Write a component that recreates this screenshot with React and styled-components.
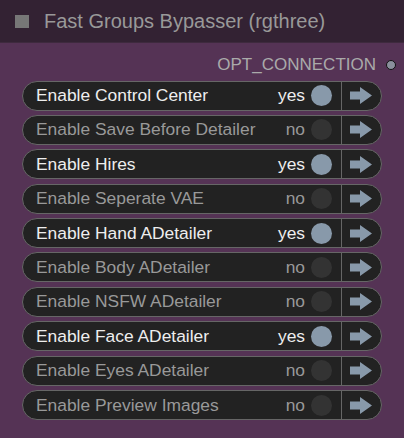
import React from "react";
import styled, { createGlobalStyle } from "styled-components";

const Global = createGlobalStyle`
  html, body { margin: 0; padding: 0; background: #553355; }
  body { font-family: Arial, "Liberation Sans", sans-serif; }
`;

const Node = styled.div`
  width: 404px;
  height: 438px;
  background: #553355;
  display: flex;
  flex-direction: column;
  overflow: hidden;
`;

const Header = styled.div`
  height: 43px;
  background: #332233;
  border-bottom: 1px solid #3e2a3e;
  display: flex;
  align-items: center;
  gap: 15px;
  padding-left: 15px;
  box-sizing: border-box;
`;

const Box = styled.div`
  width: 14px;
  height: 13px;
  background: #777;
`;

const Title = styled.div`
  font-family: "Liberation Sans", Arial, sans-serif;
  font-size: 20px;
  color: #999;
`;

const Output = styled.div`
  display: flex;
  justify-content: flex-end;
  align-items: center;
  gap: 10px;
  padding-right: 8px;
  height: 24px;
  margin-top: 10px;
`;

const OutLabel = styled.span`
  font-family: "Liberation Sans", Arial, sans-serif;
  font-size: 17px;
  color: #aaa;
`;

const Dot = styled.span`
  width: 8px;
  height: 8px;
  border-radius: 50%;
  background: #8a8f9c;
  border: 1.5px solid #111;
`;

const List = styled.div`
  display: flex;
  flex-direction: column;
  gap: 4.4px;
  padding: 3.5px 22px 0 22px;
`;

const Row = styled.div`
  height: 30px;
  box-sizing: border-box;
  border: 1.5px solid #666;
  border-radius: 15px;
  background: #222;
  display: flex;
  align-items: center;
  overflow: hidden;
`;

const Label = styled.span`
  flex: 1;
  padding-left: 13px;
  font-family: "Liberation Sans", Arial, sans-serif;
  font-size: 17.4px;
  color: ${(p) => (p.$on ? "#eee" : "#999")};
  white-space: nowrap;
`;

const Value = styled.span`
  font-family: "Liberation Sans", Arial, sans-serif;
  font-size: 17.4px;
  color: ${(p) => (p.$on ? "#eee" : "#999")};
  margin-right: 6px;
`;

const Toggle = styled.span`
  width: 21px;
  height: 21px;
  border-radius: 50%;
  background: ${(p) => (p.$on ? "#8899aa" : "#333")};
  margin-right: 9px;
`;

const ArrowCell = styled.div`
  align-self: stretch;
  width: 40px;
  border-left: 1.5px solid #666;
  display: flex;
  align-items: center;
  padding-left: 7.5px;
  box-sizing: border-box;
`;

const Arrow = () => (
  <svg width="22" height="17" viewBox="0 0 22 17">
    <path d="M0 4.5 H10 V0 L22 8.5 L10 17 V12.5 H0 Z" fill="#8899aa" />
  </svg>
);

const rows = [
  ["Enable Control Center", true],
  ["Enable Save Before Detailer", false],
  ["Enable Hires", true],
  ["Enable Seperate VAE", false],
  ["Enable Hand ADetailer", true],
  ["Enable Body ADetailer", false],
  ["Enable NSFW ADetailer", false],
  ["Enable Face ADetailer", true],
  ["Enable Eyes ADetailer", false],
  ["Enable Preview Images", false],
];

export default function App() {
  return (
    <>
      <Global />
      <Node>
        <Header>
          <Box />
          <Title>Fast Groups Bypasser (rgthree)</Title>
        </Header>
        <Output>
          <OutLabel>OPT_CONNECTION</OutLabel>
          <Dot />
        </Output>
        <List>
          {rows.map(([name, on]) => (
            <Row key={name}>
              <Label $on={on}>{name}</Label>
              <Value $on={on}>{on ? "yes" : "no"}</Value>
              <Toggle $on={on} />
              <ArrowCell>
                <Arrow />
              </ArrowCell>
            </Row>
          ))}
        </List>
      </Node>
    </>
  );
}
